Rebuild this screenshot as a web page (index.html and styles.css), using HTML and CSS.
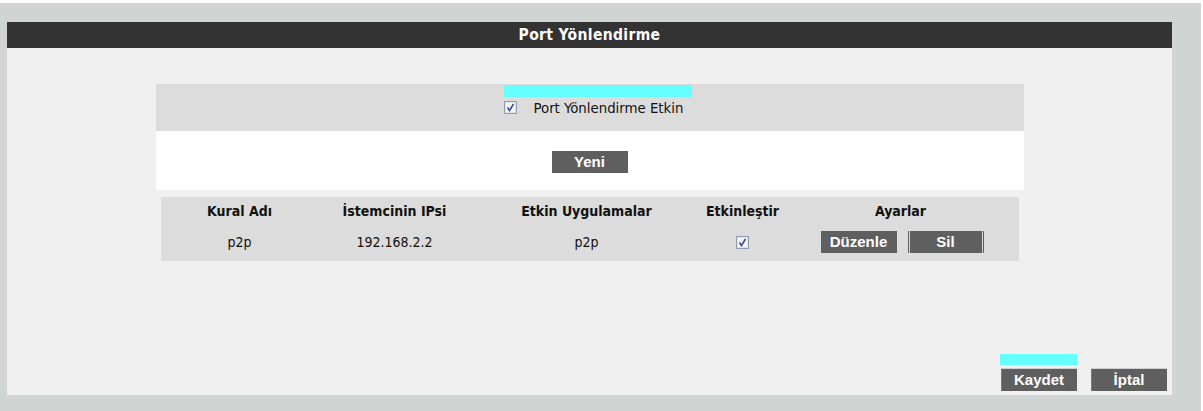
FILE: index.html
```html
<!DOCTYPE html>
<html lang="tr">
<head>
<meta charset="utf-8">
<title>Port Yönlendirme</title>
<link rel="stylesheet" href="styles.css">
</head>
<body>
<div class="frame">
  <div class="panel">
    <div class="panel-title">Port Yönlendirme</div>
    <div class="panel-body">
      <div class="enable-box">
        <div class="enable-inner">
          <div class="cyan cyan-wide"></div>
          <label class="check-row">
            <svg class="cb" width="13" height="13" viewBox="0 0 13 13"><rect x="0.5" y="0.5" width="12" height="12" fill="#f4f4f6" stroke="#8f9db2"/><rect x="1.5" y="1.5" width="10" height="10" fill="none" stroke="#dfe3ea"/><path d="M3.5 6.5 L5.5 9.5 L9.5 3" fill="none" stroke="#3a4f9a" stroke-width="1.6"/></svg>
            <span>Port Yönlendirme Etkin</span>
          </label>
        </div>
      </div>
      <div class="new-box">
        <button class="btn">Yeni</button>
      </div>
      <div class="rules">
        <div class="cell head">Kural Adı</div>
        <div class="cell head">İstemcinin IPsi</div>
        <div class="cell head">Etkin Uygulamalar</div>
        <div class="cell head">Etkinleştir</div>
        <div class="cell head">Ayarlar</div>
        <div class="cell data">p2p</div>
        <div class="cell data">192.168.2.2</div>
        <div class="cell data">p2p</div>
        <div class="cell data"><svg class="cb" width="13" height="13" viewBox="0 0 13 13"><rect x="0.5" y="0.5" width="12" height="12" fill="#f4f4f6" stroke="#8f9db2"/><rect x="1.5" y="1.5" width="10" height="10" fill="none" stroke="#dfe3ea"/><path d="M3.5 6.5 L5.5 9.5 L9.5 3" fill="none" stroke="#3a4f9a" stroke-width="1.6"/></svg></div>
        <div class="cell data actions">
          <button class="btn">Düzenle</button>
          <button class="btn btn-sides">Sil</button>
        </div>
      </div>
      <div class="footer">
        <div class="cyan cyan-small"></div>
        <div class="footer-buttons">
          <button class="btn btn-top">Kaydet</button>
          <button class="btn btn-top">İptal</button>
        </div>
      </div>
    </div>
  </div>
</div>
</body>
</html>
```

FILE: styles.css
```css
html, body {
  margin: 0;
  padding: 0;
  background: #ffffff;
}
body {
  font-family: "DejaVu Sans Condensed", "DejaVu Sans", sans-serif;
  color: #111111;
}
.frame {
  margin-top: 3px;
  width: 1201px;
  height: 408px;
  background: #d0d4d3;
  padding-top: 19px;
  box-sizing: border-box;
}
.panel {
  margin-left: 7px;
  width: 1165px;
  background: #f0f0f0;
}
.panel-title {
  height: 26px;
  background: #333333;
  color: #ffffff;
  font-weight: bold;
  font-size: 15.5px;
  letter-spacing: 0.35px;
  line-height: 26px;
  text-align: center;
}
.panel-body {
  height: 347px;
  display: flex;
  flex-direction: column;
  align-items: center;
  padding-top: 36px;
  box-sizing: border-box;
}
.enable-box {
  width: 868px;
  height: 47px;
  background: #dcdcdc;
  display: flex;
  justify-content: center;
  padding-top: 1px;
  box-sizing: border-box;
}
.enable-inner {
  width: 188px;
  margin-left: 16px;
}
.cyan {
  background: #66ffff;
}
.cyan-wide {
  height: 12px;
}
.check-row {
  display: flex;
  align-items: center;
  gap: 17px;
  height: 16px;
  margin-top: 2px;
  font-size: 14.8px;
}
.cb {
  display: block;
  flex: none;
}
.new-box {
  width: 868px;
  height: 59px;
  background: #ffffff;
  display: flex;
  justify-content: center;
  padding-top: 20px;
  box-sizing: border-box;
}
.btn {
  width: 76px;
  height: 22px;
  margin: 0;
  padding: 0;
  border: none;
  background: #5f5f5f;
  color: #ffffff;
  font-family: "Liberation Sans", Arial, sans-serif;
  font-weight: bold;
  font-size: 15px;
  line-height: 22px;
  text-align: center;
}
.btn-sides {
  box-shadow: inset 1px 0 #5f5f5f, inset 2px 0 #d8d8d8, inset -1px 0 #5f5f5f, inset -2px 0 #d8d8d8;
}
.btn-top {
  height: 23px;
  box-shadow: inset 0 1px #d0d0d0, inset 1px 0 #7a7a7a;
}
.rules {
  margin-top: 7px;
  width: 858px;
  height: 64px;
  background: #dcdcdc;
  display: grid;
  grid-template-columns: 158px 152px 232px 80px 236px;
  grid-template-rows: 26px 38px;
}
.cell {
  display: flex;
  align-items: center;
  justify-content: center;
  white-space: nowrap;
}
.head {
  font-weight: bold;
  font-size: 14px;
  padding-top: 1px;
}
.data {
  font-size: 14px;
}
.actions {
  gap: 11px;
  padding-left: 3px;
}
.footer {
  margin-top: auto;
  align-self: flex-end;
  padding-right: 5px;
  padding-bottom: 4px;
  display: flex;
  flex-direction: column;
}
.cyan-small {
  width: 77px;
  height: 11px;
  margin-bottom: 3px;
}
.footer-buttons {
  display: flex;
  gap: 14px;
  padding-left: 1px;
}
```
